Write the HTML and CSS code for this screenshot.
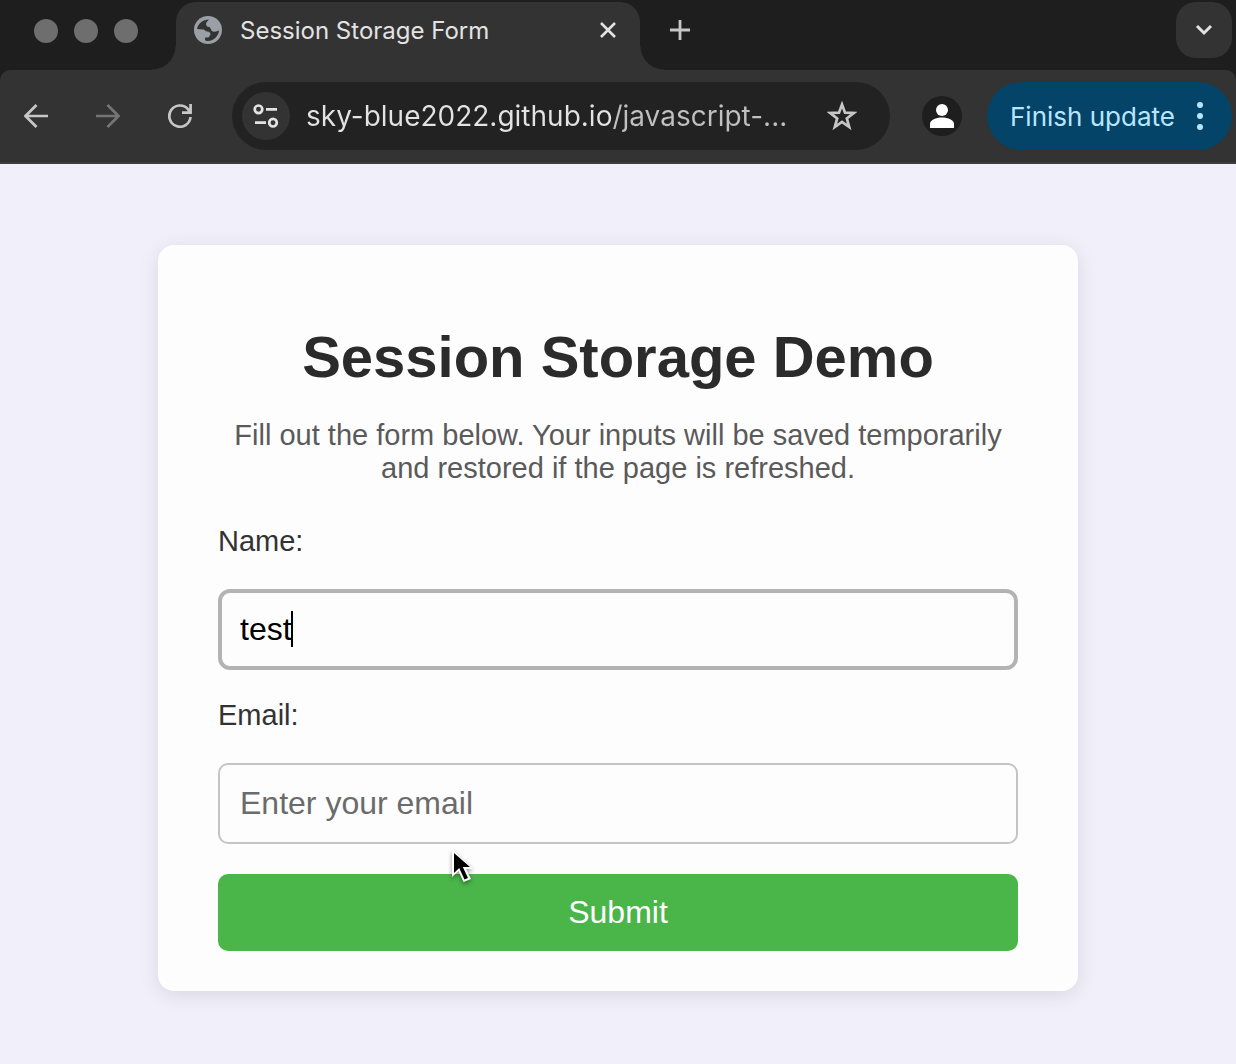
FILE: index.html
```html
<!DOCTYPE html>
<html lang="en">
<head>
<meta charset="utf-8">
<meta name="viewport" content="width=device-width, initial-scale=1">
<title>Session Storage Form</title>
<link rel="stylesheet" href="styles.css">
</head>
<body>
<header class="browser">
  <div class="tab-strip">
    <div class="lights"><span class="light"></span><span class="light"></span><span class="light"></span></div>
    <div class="tab">
      <svg class="globe" width="28" height="28" viewBox="0 0 28 28" aria-hidden="true"><circle cx="14" cy="14" r="14" fill="#9aa0a6"/><path d="M3 13C4 7.500 9 3.500 15 3.500C14 5 12 6 12 8C12 9.500 13 11 15 11C17 11 16.500 15 19 15.500C21 16 23 15.500 25 14.500C24.500 20 20 24.500 14 25C12.500 25 11 24.500 11 24V21.500H14C15.500 21.500 15 19.500 16.500 19C16.500 17 15.500 15.500 13.500 15.500C11 15.500 11 13.500 9 13.500Z" fill="#333"/></svg>
      <span class="tab-title">Session Storage Form</span>
      <button class="icon-button close" aria-label="Close tab"><svg width="16" height="16" viewBox="0 0 16 16"><path d="M1 1L15 15M15 1L1 15" stroke="#e3e3e3" stroke-width="2.600" fill="none"/></svg></button>
    </div>
    <button class="icon-button new-tab" aria-label="New tab"><svg width="20" height="20" viewBox="0 0 20 20"><path d="M10 0V20M0 10H20" stroke="#c7c7c7" stroke-width="2.800"/></svg></button>
    <button class="icon-button tab-search" aria-label="Search tabs"><svg width="18" height="12" viewBox="0 0 18 12"><path d="M2 2L9 9L16 2" stroke="#e3e3e3" stroke-width="3" fill="none"/></svg></button>
  </div>
  <div class="toolbar">
    <nav class="nav-buttons" aria-label="History">
      <button class="icon-button" aria-label="Back"><svg width="24" height="24" viewBox="0 0 24 24"><path d="M24 12H2M12.500 1L1.500 12L12.500 23" stroke="#c7c7c7" stroke-width="2.700" fill="none"/></svg></button>
      <button class="icon-button" aria-label="Forward"><svg width="24" height="24" viewBox="0 0 24 24"><path d="M0 12H22M11.500 1L22.500 12L11.500 23" stroke="#757575" stroke-width="2.700" fill="none"/></svg></button>
      <button class="icon-button" aria-label="Reload"><svg width="24" height="24" viewBox="0 0 24 24"><path d="M22.500 13A10.600 10.600 0 1 1 20 5.200L22 8M22.600 0V8.600H14" stroke="#c7c7c7" stroke-width="2.700" fill="none"/></svg></button>
    </nav>
    <div class="address">
      <button class="icon-button site-info" aria-label="Site information"><svg width="26" height="24" viewBox="0 0 26 24" fill="none" stroke="#e3e3e3" stroke-width="2.700"><circle cx="5.500" cy="5.300" r="3.800"/><path d="M13 5.300H24M2 18.700H13"/><circle cx="20" cy="18.700" r="3.800"/></svg></button>
      <input class="url" type="text" aria-label="Address" value="sky-blue2022.github.io/javascript-...">
      <button class="icon-button" aria-label="Bookmark"><svg width="30" height="30" viewBox="0 0 30 30"><path d="M15 3.500L18 11.700L26.700 12L19.800 17.400L22.200 26L15 21L7.800 26L10.200 17.400L3.300 12L12 11.700Z" fill="none" stroke="#c7c7c7" stroke-width="2.700"/></svg></button>
    </div>
    <button class="icon-button profile" aria-label="Profile"><svg width="24" height="24" viewBox="0 0 24 24" fill="#fff"><circle cx="12" cy="6" r="6"/><path d="M0 24V20C0 16 6 13.500 12 13.500S24 16 24 20V24Z"/></svg></button>
    <button class="update">Finish update <svg width="6" height="28" viewBox="0 0 6 28" fill="#b9e6ff" aria-hidden="true"><circle cx="3" cy="3" r="3"/><circle cx="3" cy="14" r="3"/><circle cx="3" cy="25" r="3"/></svg></button>
  </div>
</header>
<main class="page">
  <form class="card">
    <h1 class="heading">Session Storage Demo</h1>
    <p class="intro">Fill out the form below. Your inputs will be saved temporarily and restored if the page is refreshed.</p>
    <label class="label" for="name">Name:</label>
    <div class="control">
      <input class="field field-active" id="name" type="text" value="test">
      <span class="caret"></span>
    </div>
    <label class="label" for="email">Email:</label>
    <div class="control">
      <input class="field" id="email" type="email" placeholder="Enter your email">
    </div>
    <div class="action">
      <button class="submit" type="submit">Submit</button>
      <svg class="pointer" width="30" height="42" viewBox="0 0 30 42" aria-hidden="true"><path d="M4 3V31L10.500 25L15.500 36L23 33L18 23H25Z" fill="#fff"/><path d="M6 7V27L11.200 22L16.500 33.500L20 32L14.800 21H22Z" fill="#000"/></svg>
    </div>
  </form>
</main>
</body>
</html>
```
FILE: styles.css
```css
* { box-sizing: border-box; }
body {
  margin: 0;
  min-height: 100vh;
  background: #f1effa;
  font-family: "Liberation Sans", Arial, sans-serif;
}
button { font: inherit; border: 0; padding: 0; }
svg { display: block; flex: none; }

.browser {
  background: #1e1e1e;
  font-family: Inter, Roboto, sans-serif;
}
.tab-strip {
  display: flex;
  height: 70px;
  padding: 2px 4px 0 34px;
}
.lights {
  display: flex;
  gap: 16px;
  padding-top: 17px;
  width: 142px;
}
.light {
  width: 24px;
  height: 24px;
  border-radius: 50%;
  background: #6e6e6e;
}
.tab {
  position: relative;
  display: flex;
  align-items: center;
  width: 464px;
  padding: 0 20px 12px 18px;
  border-radius: 20px 20px 0 0;
  background: #333;
  color: #e3e3e3;
}
.tab::before,
.tab::after {
  content: "";
  position: absolute;
  bottom: 0;
  width: 24px;
  height: 24px;
}
.tab::before {
  right: 100%;
  background: radial-gradient(circle at 0 0, transparent 23px, #333 24px);
}
.tab::after {
  left: 100%;
  background: radial-gradient(circle at 100% 0, transparent 23px, #333 24px);
}
.tab-title {
  flex: 1;
  padding-left: 18px;
  font-size: 24px;
  white-space: nowrap;
}
.icon-button {
  display: flex;
  align-items: center;
  justify-content: center;
  flex: none;
  width: 32px;
  height: 32px;
  border-radius: 50%;
  background: transparent;
}
.close { width: 24px; }
.new-tab { margin: 12px 0 0 24px; }
.tab-search {
  margin-left: auto;
  width: 56px;
  height: 56px;
  border-radius: 20px;
  background: #333;
}
.toolbar {
  display: flex;
  align-items: center;
  height: 94px;
  padding: 0 4px 0 20px;
  border-bottom: 2px solid #3d3d3d;
  border-radius: 10px 10px 0 0;
  background: #333;
}
.nav-buttons {
  display: flex;
  gap: 40px;
  margin-right: 36px;
}
.address {
  display: flex;
  align-items: center;
  flex: 1;
  min-width: 0;
  height: 68px;
  padding: 0 32px 0 10px;
  border-radius: 34px;
  background: #222;
}
.site-info {
  width: 48px;
  height: 48px;
  background: #333;
}
.url {
  flex: 1;
  min-width: 0;
  margin: 0 16px;
  padding: 0;
  border: 0;
  outline: 0;
  background: linear-gradient(90deg, #e3e3e3 306px, #c0c0c0 306px);
  background-clip: text;
  -webkit-background-clip: text;
  -webkit-text-fill-color: transparent;
  color: #e3e3e3;
  font: 28px Inter, Roboto, sans-serif;
}
.profile {
  width: 40px;
  height: 40px;
  margin: 0 25px 0 32px;
  background: #1e1e1e;
}
.update {
  display: flex;
  align-items: center;
  justify-content: space-between;
  flex: none;
  width: 245px;
  height: 68px;
  padding: 0 29px 0 23px;
  border-radius: 34px;
  background: #044468;
  color: #b9e6ff;
  font-size: 26px;
  white-space: nowrap;
}

.page { padding: 81px 24px 73px; }
.card {
  max-width: 920px;
  margin: 0 auto;
  padding: 78px 60px 40px;
  border-radius: 16px;
  background: #fdfdfd;
  box-shadow: 0 4px 20px rgba(0, 0, 0, 0.1);
}
.heading {
  margin: 0 0 29px;
  color: #2b2b2b;
  font-size: 58px;
  line-height: 67px;
  text-align: center;
}
.intro {
  margin: 0 0 40px;
  color: #5a5a5a;
  font-size: 29px;
  line-height: 33px;
  text-align: center;
}
.label {
  display: block;
  margin-bottom: 31px;
  color: #333;
  font-size: 29px;
  line-height: 33px;
}
.control {
  position: relative;
  margin-bottom: 29px;
}
.field {
  display: block;
  width: 100%;
  height: 81px;
  padding: 0 20px;
  border: 2px solid #c4c4c4;
  border-radius: 10px;
  outline: 0;
  background: #fdfdfd;
  color: #000;
  font: 32px "Liberation Sans", Arial, sans-serif;
}
.field::placeholder { color: #6b6b6b; }
.field-active {
  padding: 0 18px;
  border: 4px solid #b3b3b3;
  border-radius: 12px;
}
.caret {
  position: absolute;
  left: 73px;
  top: 22px;
  width: 2px;
  height: 36px;
  background: #000;
}
.action {
  position: relative;
  margin-top: 30px;
}
.submit {
  display: block;
  width: 100%;
  height: 77px;
  border-radius: 10px;
  background: #4ab548;
  color: #fff;
  font-size: 32px;
}
.pointer {
  position: absolute;
  left: 230px;
  top: -28px;
  filter: drop-shadow(0 2px 2px rgba(0, 0, 0, 0.4));
}
```
